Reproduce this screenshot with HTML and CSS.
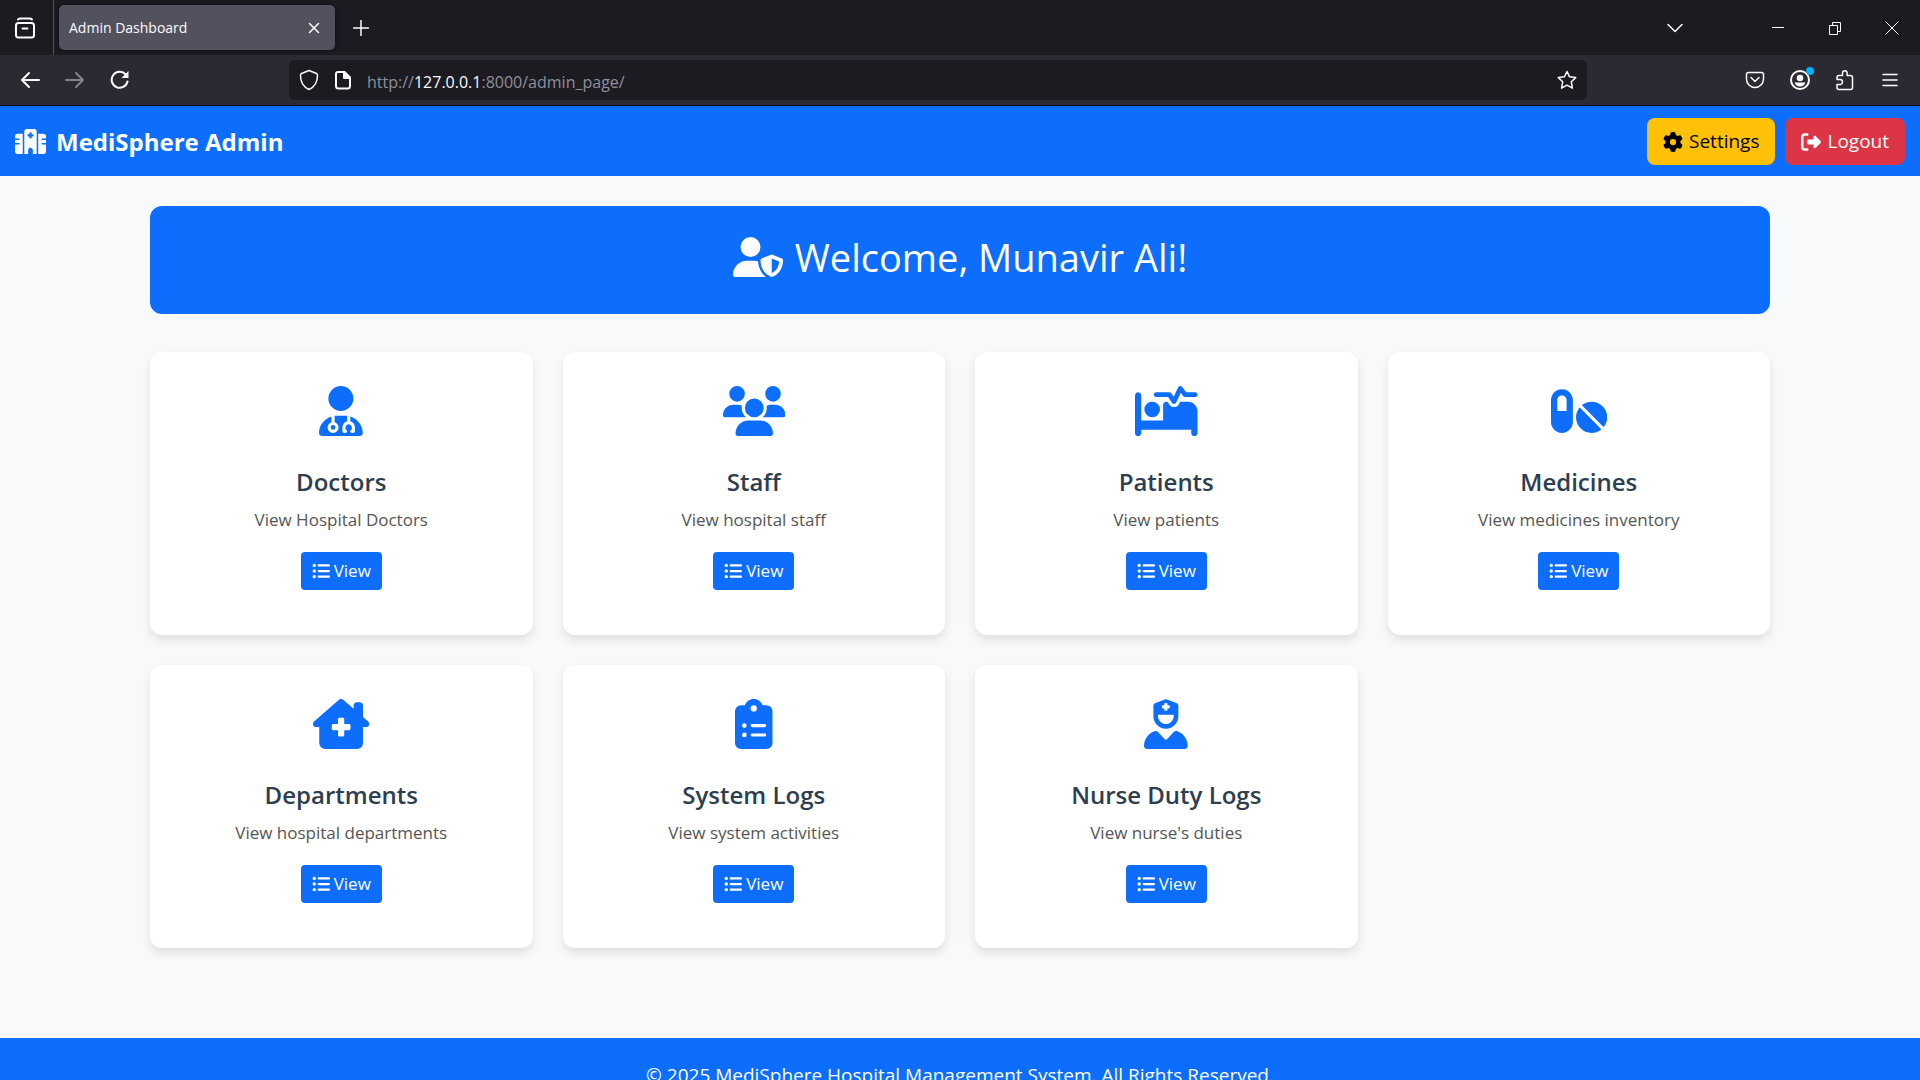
FILE: index.html
```html
<!DOCTYPE html>
<html lang="en">
<head>
<meta charset="utf-8">
<title>Admin Dashboard</title>
<link rel="stylesheet" href="styles.css">
</head>
<body>
<svg class="sprite" aria-hidden="true">
  <symbol id="list" viewBox="0 0 512 512"><path d="M64 144a48 48 0 1 0 0-96 48 48 0 1 0 0 96zM192 64c-17.700 0-32 14.300-32 32s14.300 32 32 32H480c17.700 0 32-14.300 32-32s-14.300-32-32-32H192zm0 160c-17.700 0-32 14.300-32 32s14.300 32 32 32H480c17.700 0 32-14.300 32-32s-14.300-32-32-32H192zm0 160c-17.700 0-32 14.300-32 32s14.300 32 32 32H480c17.700 0 32-14.300 32-32s-14.300-32-32-32H192zM64 464a48 48 0 1 0 0-96 48 48 0 1 0 0 96zm48-208a48 48 0 1 0 -96 0 48 48 0 1 0 96 0z"/></symbol>
</svg>
<div class="window">
  <header class="tabbar">
    <button class="tool recent" aria-label="Recent browsing"><svg width="22" height="22" viewBox="0 0 22 22" class="line thick"><rect x="2" y="6" width="18" height="14.500" rx="2.500"/><path d="M4 2.500Q5 1.500 6.500 1.500H15.500Q17 1.500 18 2.500M8.500 11.500H13.500"/></svg></button>
    <div class="tab"><span>Admin Dashboard</span><button class="tool close-tab" aria-label="Close tab"><svg width="12" height="12" viewBox="0 0 12 12" class="line"><path d="M1.500 1.500L10.500 10.500M10.500 1.500L1.500 10.500"/></svg></button></div>
    <button class="tool new-tab" aria-label="New tab"><svg width="16" height="16" viewBox="0 0 16 16" class="line"><path d="M8 .5V15.500M.5 8H15.500"/></svg></button>
    <button class="tool tabs-list" aria-label="List all tabs"><svg width="16" height="16" viewBox="0 0 16 16" class="line"><path d="M1 4.500L8 11.500L15 4.500"/></svg></button>
    <div class="controls">
      <button class="tool" aria-label="Minimize"><svg width="14" height="14" viewBox="0 0 14 14" class="thin"><path d="M1 6.500H13"/></svg></button>
      <button class="tool" aria-label="Restore"><svg width="14" height="14" viewBox="0 0 14 14" class="thin"><path d="M1.500 4.500H9.500V13.500H1.500ZM4.500 4.500V1.500H12.500V10.500H9.500"/></svg></button>
      <button class="tool" aria-label="Close"><svg width="14" height="14" viewBox="0 0 14 14" class="thin"><path d="M.5 .5L13.500 13.500M13.500 .5L.5 13.500"/></svg></button>
    </div>
  </header>
  <div class="toolbar">
    <div class="history">
      <button class="tool" aria-label="Back"><svg width="20" height="20" viewBox="0 0 20 20" class="line thick"><path d="M19 10H2M9 3L2 10L9 17"/></svg></button>
      <button class="tool faded" aria-label="Forward"><svg width="20" height="20" viewBox="0 0 20 20" class="line thick"><path d="M1 10H18M11 3L18 10L11 17"/></svg></button>
      <button class="tool" aria-label="Reload"><svg width="20" height="20" viewBox="0 0 20 20" class="line thick"><path d="M17.500 11.500A8 8 0 1 1 15.700 4.500"/><path d="M18.500 1V8H11.500Z" fill="#fbfbfe" stroke="none"/></svg></button>
    </div>
    <div class="address">
      <svg width="20" height="22" viewBox="0 0 20 22" class="line"><path d="M10 1.500L17.500 4.500Q18.500 5 18.500 6.500C18.500 13 15.500 18 10 20.500C4.500 18 1.500 13 1.500 6.500Q1.500 5 2.500 4.500Z"/></svg>
      <svg width="18" height="20" viewBox="0 0 18 20" class="line thick"><path d="M4 2H10.500L16 7.500V16Q16 18.500 13.500 18.500H4.500Q2 18.500 2 16V4Q2 2 4 2Z"/><path d="M10 2V8H16Z" fill="#fbfbfe"/></svg>
      <p class="url">http://<b>127.0.0.1</b>:8000/admin_page/</p>
      <button class="tool" aria-label="Bookmark this page"><svg width="20" height="20" viewBox="0 0 20 20" class="line"><path d="M10 1.500L12.600 6.800L18.700 7.600L14.300 11.800L15.400 18.200L10 15.200L4.600 18.200L5.700 11.800L1.300 7.600L7.400 6.800Z"/></svg></button>
    </div>
    <div class="actions">
      <button class="tool" aria-label="Save to Pocket"><svg width="20" height="20" viewBox="0 0 20 20" class="line"><path d="M3.500 2.500H16.500Q18.500 2.500 18.500 4.500V9A8.500 8.500 0 0 1 1.500 9V4.500Q1.500 2.500 3.500 2.500ZM6 7.500L10 11.500L14 7.500"/></svg></button>
      <button class="tool" aria-label="Account"><svg class="account" width="20" height="26" viewBox="2 0 20 26"><circle cx="12" cy="13" r="9" fill="none" stroke="#fbfbfe" stroke-width="2"/><circle cx="12" cy="11" r="3.300" fill="#fbfbfe"/><path d="M6.500 15.500H17.500Q16 19.500 12 19.500T6.500 15.500Z" fill="#fbfbfe"/><circle cx="22" cy="4" r="4" fill="#00b3f4"/></svg></button>
      <button class="tool" aria-label="Extensions"><svg width="20" height="22" viewBox="0 0 20 22" class="line"><path d="M7.500 6.500V4A2.300 2.300 0 0 1 12.100 4V6.500H15.500Q17.500 6.500 17.500 8.500V18.500Q17.500 20.500 15.500 20.500H4Q2 20.500 2 18.500V15.500H5A2.300 2.300 0 0 0 5 10.500H2V8.500Q2 6.500 4 6.500Z"/></svg></button>
      <button class="tool" aria-label="Menu"><svg width="20" height="16" viewBox="-2 0 20 16" class="line"><path d="M1 2.500H15M1 8H15M1 13.500H15"/></svg></button>
    </div>
  </div>
  <div class="page">
    <nav class="navbar">
      <a class="brand" href="#"><svg width="31" height="25" viewBox="0 0 640 512"><path fill-rule="evenodd" d="M192 48c0-26.500 21.500-48 48-48H400c26.500 0 48 21.500 48 48V512H368V432c0-26.500-21.500-48-48-48s-48 21.500-48 48v80H192V48zM48 96H160V512H48c-26.500 0-48-21.500-48-48V320H80c8.800 0 16-7.200 16-16s-7.200-16-16-16H0V224H80c8.800 0 16-7.200 16-16s-7.200-16-16-16H0V144c0-26.500 21.500-48 48-48zm544 0c26.500 0 48 21.500 48 48v48H560c-8.800 0-16 7.200-16 16s7.200 16 16 16h80v64H560c-8.800 0-16 7.200-16 16s7.200 16 16 16h80V464c0 26.500-21.500 48-48 48H480V96H592zM312 64c-8.800 0-16 7.200-16 16v24H272c-8.800 0-16 7.200-16 16v16c0 8.800 7.200 16 16 16h24v24c0 8.800 7.200 16 16 16h16c8.800 0 16-7.200 16-16V152h24c8.800 0 16-7.200 16-16V120c0-8.800-7.200-16-16-16H344V80c0-8.800-7.200-16-16-16H312z"/></svg><span>MediSphere Admin</span></a>
      <div class="nav-buttons">
        <a class="btn warning" href="#settings"><svg width="20" height="20" viewBox="0 0 512 512"><path d="M495.900 166.600c3.200 8.700 .5 18.400-6.400 24.600l-43.300 39.400c1.100 8.300 1.700 16.800 1.700 25.400s-.6 17.100-1.700 25.400l43.300 39.400c6.900 6.200 9.600 15.900 6.400 24.600c-4.400 11.900-9.700 23.300-15.800 34.300l-4.700 8.100c-6.600 11-14 21.400-22.100 31.200c-5.900 7.200-15.700 9.600-24.500 6.800l-55.700-17.700c-13.400 10.300-28.200 18.900-44 25.400l-12.500 57.100c-2 9.100-9 16.300-18.200 17.800c-13.800 2.300-28 3.500-42.500 3.500s-28.700-1.200-42.500-3.500c-9.200-1.500-16.200-8.700-18.200-17.800l-12.500-57.100c-15.800-6.500-30.600-15.100-44-25.400L83.100 425.900c-8.800 2.800-18.600 .3-24.500-6.800c-8.100-9.800-15.500-20.200-22.100-31.200l-4.700-8.100c-6.100-11-11.400-22.400-15.800-34.300c-3.200-8.700-.5-18.400 6.400-24.600l43.300-39.400C64.600 273.100 64 264.600 64 256s.6-17.100 1.700-25.400L22.400 191.200c-6.900-6.200-9.600-15.900-6.400-24.600c4.400-11.900 9.700-23.300 15.800-34.300l4.700-8.100c6.600-11 14-21.400 22.100-31.200c5.900-7.200 15.700-9.600 24.500-6.800l55.700 17.700c13.400-10.300 28.200-18.900 44-25.400l12.500-57.100c2-9.100 9-16.300 18.200-17.800C227.300 1.200 241.500 0 256 0s28.700 1.200 42.500 3.500c9.200 1.500 16.200 8.700 18.200 17.800l12.500 57.100c15.800 6.500 30.600 15.100 44 25.400l55.700-17.700c8.800-2.800 18.600-.3 24.500 6.800c8.100 9.800 15.500 20.200 22.100 31.200l4.700 8.100c6.100 11 11.400 22.400 15.800 34.300zM256 336a80 80 0 1 0 0-160 80 80 0 1 0 0 160z"/></svg>Settings</a>
        <a class="btn danger" href="#logout"><svg width="20" height="20" viewBox="0 0 512 512"><path d="M377.900 105.900L500.700 228.700c7.200 7.200 11.300 17.100 11.300 27.300s-4.100 20.100-11.300 27.300L377.900 406.100c-6.400 6.400-15 9.900-24 9.900c-18.700 0-33.900-15.200-33.900-33.900l0-62.100-128 0c-17.700 0-32-14.300-32-32l0-64c0-17.700 14.300-32 32-32l128 0 0-62.100c0-18.700 15.200-33.900 33.900-33.900c9 0 17.600 3.600 24 9.900zM160 96L96 96c-17.700 0-32 14.300-32 32l0 256c0 17.700 14.300 32 32 32l64 0c17.700 0 32 14.300 32 32s-14.300 32-32 32l-64 0c-53 0-96-43-96-96L0 128C0 75 43 32 96 32l64 0c17.700 0 32 14.300 32 32s-14.300 32-32 32z"/></svg>Logout</a>
      </div>
    </nav>
    <main class="container">
      <h1 class="banner"><svg width="50" height="40" viewBox="0 0 640 512"><path d="M224 256A128 128 0 1 0 224 0a128 128 0 1 0 0 256zm-45.700 48C79.800 304 0 383.800 0 482.300C0 498.700 13.300 512 29.700 512H418.300c1.800 0 3.500-.2 5.300-.5c-76.300-55.100-99.800-141-103.100-200.200c-16.100-4.800-33.100-7.300-50.700-7.300H178.300zm308.800-78.300l-120 48C358 277.400 352 286.200 352 296c0 63.300 25.900 168.800 134.800 214.200c5.900 2.500 12.600 2.500 18.500 0C614.100 464.800 640 359.300 640 296c0-9.800-6-18.600-15.100-22.300l-120-48c-5.700-2.300-12.100-2.300-17.800 0zM591.400 312c-3.900 50.700-27.200 116.700-95.400 149.700V273.800L591.400 312z"/></svg><span>Welcome, Munavir Ali!</span></h1>
      <div class="cards">
        <section class="card">
          <svg class="icon" viewBox="0 0 448 512"><path d="M224 256A128 128 0 1 0 224 0a128 128 0 1 0 0 256zm-96 55.200C54 332.900 0 401.300 0 482.300C0 498.700 13.300 512 29.700 512H418.300c16.400 0 29.700-13.300 29.700-29.700c0-81-54-149.400-128-171.100V362c27.600 7.100 48 32.200 48 62v40c0 8.800-7.200 16-16 16H336c-8.800 0-16-7.200-16-16s7.200-16 16-16V424c0-17.700-14.300-32-32-32s-32 14.300-32 32v24c8.800 0 16 7.200 16 16s-7.200 16-16 16H256c-8.800 0-16-7.200-16-16V424c0-29.800 20.400-54.900 48-62V304.900c-6-.6-12.100-.9-18.300-.9H178.300c-6.200 0-12.300 .3-18.300 .9v65.400c23.100 6.900 40 28.300 40 53.700c0 30.900-25.100 56-56 56s-56-25.100-56-56c0-25.400 16.900-46.800 40-53.700V311.200zM144 448a24 24 0 1 0 0-48 24 24 0 1 0 0 48z"/></svg>
          <h2>Doctors</h2><p>View Hospital Doctors</p>
          <a class="btn view" href="#doctors"><svg width="18" height="18"><use href="#list"/></svg>View</a>
        </section>
        <section class="card">
          <svg class="icon" viewBox="0 0 640 512"><path d="M144 0a80 80 0 1 1 0 160A80 80 0 1 1 144 0zM512 0a80 80 0 1 1 0 160A80 80 0 1 1 512 0zM0 298.700C0 239.800 47.800 192 106.700 192h42.700c15.900 0 31 3.500 44.600 9.700c-1.300 7.200-1.900 14.700-1.900 22.300c0 38.200 16.800 72.500 43.300 96c-.2 0-.4 0-.7 0H21.300C9.600 320 0 310.400 0 298.700zM405.300 320c-.2 0-.4 0-.7 0c26.600-23.500 43.300-57.800 43.300-96c0-7.600-.7-15-1.900-22.300c13.600-6.300 28.700-9.700 44.600-9.700h42.700C592.200 192 640 239.800 640 298.700c0 11.800-9.600 21.300-21.300 21.300H405.300zM224 224a96 96 0 1 1 192 0 96 96 0 1 1 -192 0zM128 485.300C128 411.700 187.700 352 261.300 352H378.700C452.300 352 512 411.700 512 485.300c0 14.700-11.900 26.700-26.700 26.700H154.700c-14.700 0-26.700-11.900-26.700-26.700z"/></svg>
          <h2>Staff</h2><p>View hospital staff</p>
          <a class="btn view" href="#staff"><svg width="18" height="18"><use href="#list"/></svg>View</a>
        </section>
        <section class="card">
          <svg class="icon" viewBox="0 0 640 512"><path d="M483.200 9.600L524 64h92c13.300 0 24 10.700 24 24s-10.700 24-24 24H512c-7.600 0-14.700-3.600-19.200-9.600L468.700 70.300l-47 99.900c-3.700 7.800-11.300 13.100-19.900 13.700s-16.900-3.400-21.700-10.600L339.200 112H216c-13.300 0-24-10.700-24-24s10.700-24 24-24H352c8 0 15.500 4 20 10.700l24.400 36.600 45.900-97.500C445.900 6.200 453.200 1 461.600 .1s16.600 2.700 21.600 9.500zM320 160h12.700l20.700 31.100c11.200 16.800 30.600 26.300 50.700 24.800s37.900-13.700 46.500-32L461.900 160H544c53 0 96 43 96 96V480c0 17.700-14.300 32-32 32s-32-14.300-32-32V448H352 320 64v32c0 17.700-14.300 32-32 32s-32-14.300-32-32V96C0 78.300 14.300 64 32 64s32 14.300 32 32V352H288V192c0-17.700 14.300-32 32-32zm-144 0a80 80 0 1 1 0 160 80 80 0 1 1 0-160z"/></svg>
          <h2>Patients</h2><p>View patients</p>
          <a class="btn view" href="#patients"><svg width="18" height="18"><use href="#list"/></svg>View</a>
        </section>
        <section class="card">
          <svg class="icon" viewBox="0 0 576 512"><path fill-rule="evenodd" d="M112 32C50.100 32 0 82.100 0 144V368c0 61.900 50.100 112 112 112s112-50.100 112-112V144c0-61.900-50.100-112-112-112zm48 224H64V144c0-26.500 21.500-48 48-48s48 21.500 48 48V256zM299.800 226.200c-3.500-3.500-9.500-3-12.300 1.200C267.500 253.700 256 285.500 256 320c0 88.400 71.600 160 160 160 34.500 0 66.400-10.900 92.500-29.600 4.100-2.900 4.700-8.800 1.200-12.300zM532.200 413.800c3.500 3.500 9.500 3 12.300-1.200C564.500 386.300 576 354.500 576 320c0-88.400-71.600-160-160-160-34.500 0-66.400 10.900-92.500 29.600-4.100 2.900-4.700 8.800-1.200 12.300z"/></svg>
          <h2>Medicines</h2><p>View medicines inventory</p>
          <a class="btn view" href="#medicines"><svg width="18" height="18"><use href="#list"/></svg>View</a>
        </section>
        <section class="card">
          <svg class="icon" viewBox="0 0 576 512"><path fill-rule="evenodd" d="M543.800 287.600c17 0 32-14 32-32.100c1-9-3-17-11-24L512 185V64c0-17.700-14.300-32-32-32H448c-17.700 0-32 14.300-32 32v36.700L309.500 7c-6-5-14-7-21-7s-15 1-22 8L10 231.500c-7 7-10 15-10 24c0 18 14 32.100 32 32.100h32V448c0 35.300 28.700 64 64 64H448.500c35.500 0 64.200-28.800 64-64.300l-.7-160.200h32zM256 208c0-8.800 7.200-16 16-16h32c8.800 0 16 7.200 16 16v48h48c8.800 0 16 7.200 16 16v32c0 8.800-7.200 16-16 16H320v48c0 8.800-7.200 16-16 16H272c-8.800 0-16-7.200-16-16V320H208c-8.800 0-16-7.200-16-16V272c0-8.800 7.200-16 16-16h48V208z"/></svg>
          <h2>Departments</h2><p>View hospital departments</p>
          <a class="btn view" href="#departments"><svg width="18" height="18"><use href="#list"/></svg>View</a>
        </section>
        <section class="card">
          <svg class="icon" viewBox="0 0 384 512"><path fill-rule="evenodd" d="M192 0c-41.800 0-77.400 26.700-90.500 64H64C28.700 64 0 92.700 0 128V448c0 35.300 28.700 64 64 64H320c35.300 0 64-28.700 64-64V128c0-35.300-28.700-64-64-64H282.500C269.400 26.700 233.800 0 192 0zm0 64a32 32 0 1 1 0 64 32 32 0 1 1 0-64zM72 272a24 24 0 1 1 48 0 24 24 0 1 1 -48 0zm104-16H304c8.800 0 16 7.200 16 16s-7.200 16-16 16H176c-8.800 0-16-7.200-16-16s7.200-16 16-16zM72 368a24 24 0 1 1 48 0 24 24 0 1 1 -48 0zm88 0c0-8.800 7.200-16 16-16H304c8.800 0 16 7.200 16 16s-7.200 16-16 16H176c-8.800 0-16-7.200-16-16z"/></svg>
          <h2>System Logs</h2><p>View system activities</p>
          <a class="btn view" href="#system-logs"><svg width="18" height="18"><use href="#list"/></svg>View</a>
        </section>
        <section class="card">
          <svg class="icon" viewBox="0 0 448 512"><path fill-rule="evenodd" d="M96 128V70.200c0-13.300 8.300-25.300 20.800-30l96-36c7.200-2.700 15.200-2.700 22.500 0l96 36c12.500 4.700 20.800 16.600 20.800 30V128h-.3c.2 2.600 .3 5.300 .3 8v40c0 70.700-57.300 128-128 128s-128-57.300-128-128V136c0-2.700 .1-5.400 .3-8H96zm48 48c0 44.200 35.800 80 80 80s80-35.800 80-80V160H144v16zM111.900 327.700c10.500-3.400 21.800 .4 29.400 8.500l71 75.500c6.300 6.700 17 6.700 23.300 0l71-75.500c7.600-8.100 18.900-11.900 29.400-8.500C401 348.600 448 409.400 448 481.300c0 17-13.800 30.700-30.700 30.700H30.700C13.800 512 0 498.200 0 481.300c0-71.900 47-132.700 111.900-153.600zM208 48V64H192c-4.400 0-8 3.600-8 8V88c0 4.400 3.600 8 8 8h16v16c0 4.400 3.600 8 8 8h16c4.400 0 8-3.600 8-8V96h16c4.400 0 8-3.600 8-8V72c0-4.400-3.600-8-8-8H240V48c0-4.400-3.600-8-8-8H216c-4.400 0-8 3.600-8 8z"/></svg>
          <h2>Nurse Duty Logs</h2><p>View nurse's duties</p>
          <a class="btn view" href="#nurse-duty-logs"><svg width="18" height="18"><use href="#list"/></svg>View</a>
        </section>
      </div>
    </main>
    <footer class="footer">© 2025 MediSphere Hospital Management System. All Rights Reserved.</footer>
  </div>
</div>
</body>
</html>
```
FILE: styles.css
```css
* { box-sizing: border-box; margin: 0; }
body { font-family: "Open Sans", "Noto Sans", sans-serif; font-size: 19px; }
svg { display: block; flex: none; fill: currentColor; }
a { color: inherit; text-decoration: none; }
.sprite { display: none; }
.window { display: flex; flex-direction: column; height: 100vh; overflow: hidden; }

/* Browser chrome */
.line { fill: none; stroke: currentColor; stroke-width: 1.5; stroke-linecap: round; stroke-linejoin: round; }
.thick { stroke-width: 2; }
.thin { fill: none; stroke: currentColor; stroke-width: 1; }
.tool { display: flex; align-items: center; justify-content: center; border: 0; padding: 0; background: none; color: #fbfbfe; }
.faded { color: #84838b; }
.account { overflow: visible; }
.tabbar { display: flex; align-items: center; flex: none; height: 55px; background: #1c1b22; color: #fbfbfe; }
.recent { width: 54px; height: 55px; padding-right: 4px; border-right: 1px solid #52515c; }
.tab { display: flex; align-items: center; justify-content: space-between; width: 276px; height: 45px; margin-left: 5px; padding: 0 15px 0 10px; border-radius: 5px; background: #52525e; box-shadow: 0 0 4px #0c0c12; font-size: 14px; }
.new-tab { margin-left: 18px; }
.tabs-list { margin-left: auto; margin-right: 88px; }
.controls { display: flex; gap: 43px; padding-right: 21px; }
.toolbar { display: flex; align-items: center; flex: none; height: 51px; border-bottom: 1px solid #0c0c0d; background: #2b2a33; }
.history { display: flex; flex: none; gap: 25px; width: 289px; padding-left: 20px; }
.address { display: flex; align-items: center; flex: 1; height: 40px; gap: 15px; padding: 0 10px; border-radius: 5px; background: #1c1b22; color: #fbfbfe; }
.url { flex: 1; padding-top: 3px; font-size: 16px; line-height: 24px; color: #8f8f98; }
.url b { font-weight: 400; color: #fbfbfe; }
.actions { display: flex; flex: none; align-items: center; justify-content: flex-end; gap: 25px; width: 333px; padding-right: 20px; }

/* Dashboard */
.page { display: flex; flex-direction: column; flex: 1; min-height: 0; overflow: hidden; background: #f8f9fa; }
.navbar { display: flex; flex: none; align-items: center; justify-content: space-between; padding: 12px 15px 11px; background: #0d6efd; color: #fff; }
.brand { display: flex; align-items: center; gap: 10px; font-size: 24px; font-weight: 700; }
.nav-buttons { display: flex; gap: 10px; }
.btn { display: inline-flex; align-items: center; gap: 6px; }
.warning, .danger { padding: 8px 16px; border-radius: 8px; line-height: 31px; }
.warning { background: #ffc107; color: #000; }
.danger { background: #dc3545; color: #fff; }
.container { flex: none; padding: 30px 150px 90px; }
.banner { display: flex; align-items: center; justify-content: center; gap: 12px; padding: 27px 30px 33px; border-radius: 12px; background: #0d6efd; color: #fff; font-size: 38px; font-weight: 400; line-height: 48px; }
.cards { display: grid; grid-template-columns: repeat(4, 1fr); gap: 30px; margin-top: 38px; }
.card { display: flex; flex-direction: column; align-items: center; padding: 34px 30px 45px; border-radius: 12px; background: #fff; box-shadow: 0 5px 10px rgba(0, 0, 0, .1); color: #2c3e50; }
.icon { height: 50px; color: #0d6efd; }
.card h2 { margin: 31px 0 9px; font-size: 24px; font-weight: 600; line-height: 30px; }
.card p { margin-bottom: 19px; font-size: 17px; line-height: 27px; color: #555; }
.view { gap: 4px; padding: 4px 11px; border-radius: 4px; background: #0d6efd; color: #fff; font-size: 17px; line-height: 30px; }
.footer { flex: none; padding: 22px 20px 20px; background: #0d6efd; color: #fff; line-height: 30px; text-align: center; }
```
